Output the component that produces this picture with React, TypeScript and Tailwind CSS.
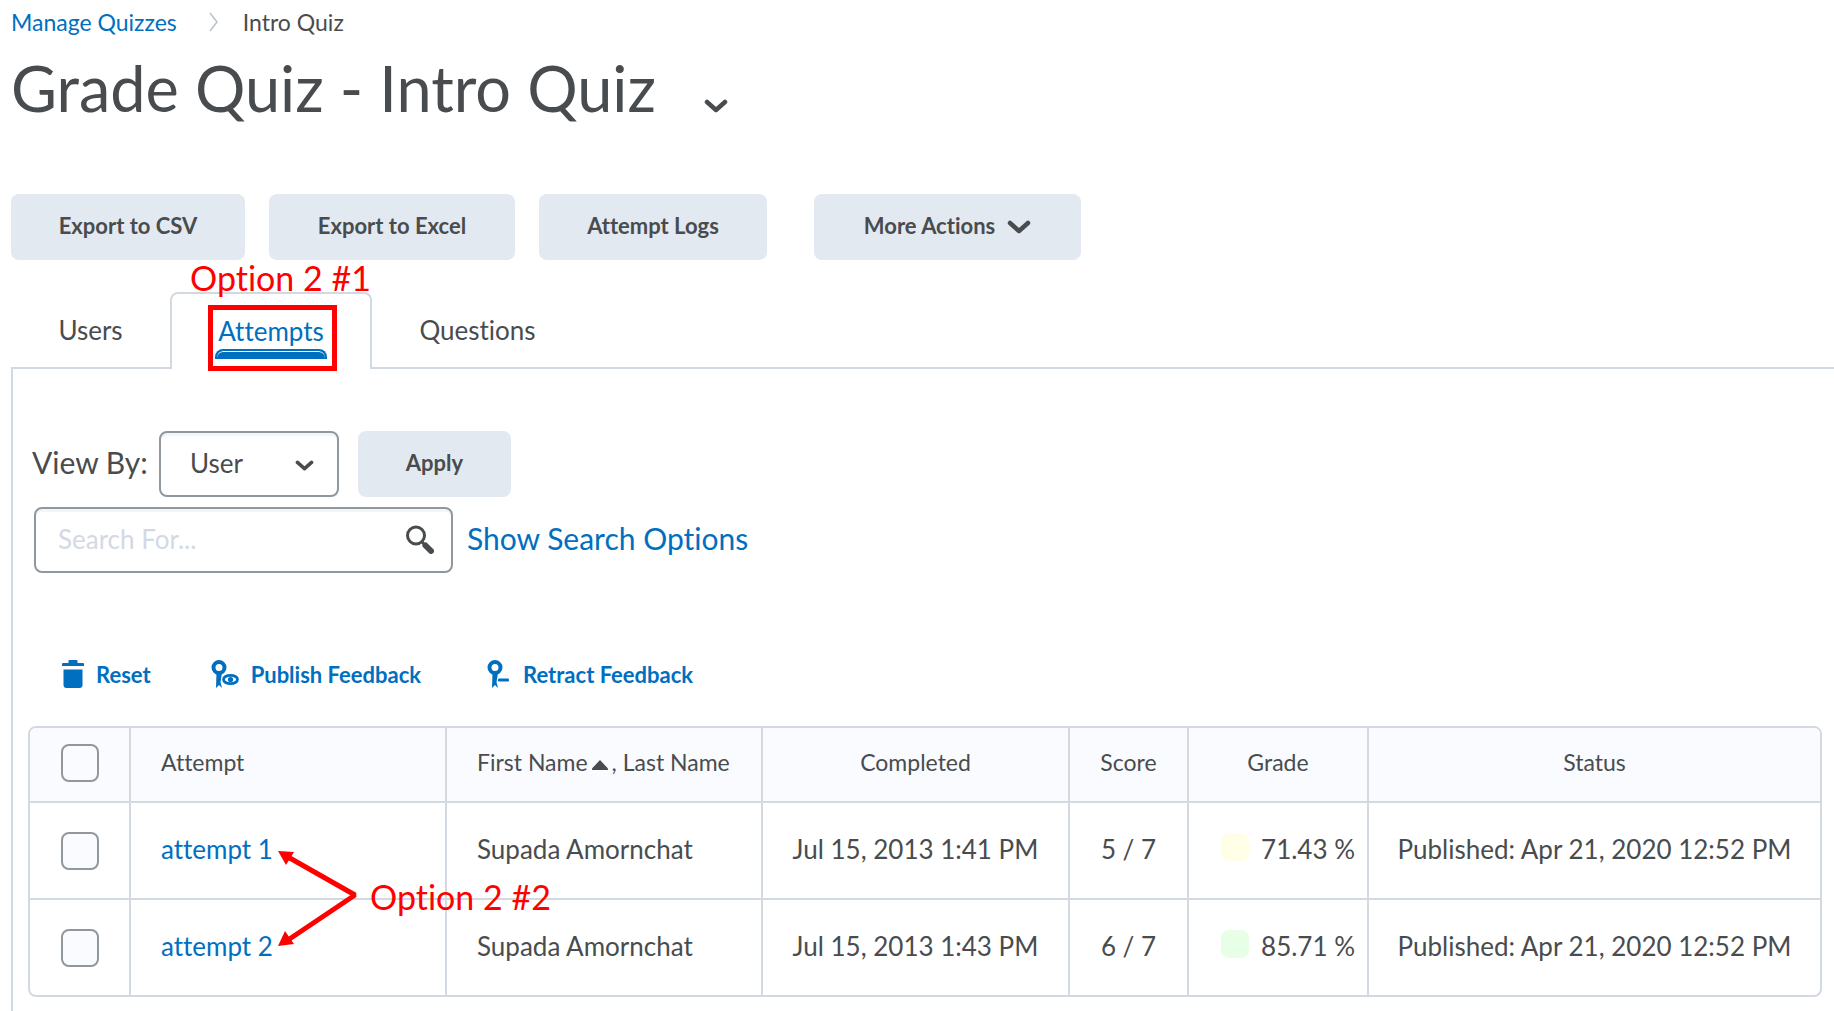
import type { ReactNode } from 'react';

interface Attempt {
  id: number;
  name: string;
  completed: string;
  score: string;
  grade: string;
  swatch: string;
  status: string;
}

const attempts: Attempt[] = [
  {
    id: 1,
    name: 'Supada Amornchat',
    completed: 'Jul 15, 2013 1:41 PM',
    score: '5 / 7',
    grade: '71.43 %',
    swatch: 'bg-[#fffee6]',
    status: 'Published: Apr 21, 2020 12:52 PM',
  },
  {
    id: 2,
    name: 'Supada Amornchat',
    completed: 'Jul 15, 2013 1:43 PM',
    score: '6 / 7',
    grade: '85.71 %',
    swatch: 'bg-[#e6ffe6]',
    status: 'Published: Apr 21, 2020 12:52 PM',
  },
];

function Chevron({ className }: { className: string }) {
  return (
    <svg viewBox="0 0 24 14" className={className} fill="none" stroke="currentColor" strokeWidth="4.5" strokeLinecap="round" strokeLinejoin="round" aria-hidden="true">
      <path d="M3 3l9 8 9-8" />
    </svg>
  );
}

function SearchIcon() {
  return (
    <svg viewBox="0 0 28 29" className="h-[29px] w-7" fill="none" stroke="currentColor" aria-hidden="true">
      <circle cx="10" cy="10.500" r="8.500" strokeWidth="3" />
      <path d="M16 17l3 3" strokeWidth="3" />
      <path d="M19.500 20.500l5.500 5.500" strokeWidth="6" strokeLinecap="round" />
    </svg>
  );
}

function TrashIcon() {
  return (
    <svg viewBox="0 0 22 28" className="h-7 w-[22px]" fill="currentColor" aria-hidden="true">
      <path d="M7.500 0h7a1 1 0 0 1 1 1v2H21a1 1 0 0 1 1 1v2H0V4a1 1 0 0 1 1-1h5.500V1a1 1 0 0 1 1-1z" />
      <path d="M1.500 9.500h19V25a3 3 0 0 1-3 3h-13a3 3 0 0 1-3-3z" />
    </svg>
  );
}

// award ribbon shared by the publish and retract actions
function Ribbon() {
  return (
    <>
      <circle cx="8" cy="7.500" r="5.500" fill="none" stroke="currentColor" strokeWidth="4" />
      <path d="M5.500 13h5v4L9.500 22l1.500 6-3-3-3 3z" />
    </>
  );
}

function PublishIcon() {
  return (
    <svg viewBox="0 0 28 28" className="h-7 w-7" fill="currentColor" aria-hidden="true">
      <Ribbon />
      <ellipse cx="19.500" cy="19.500" rx="9.500" ry="7" fill="#fff" />
      <ellipse cx="19.500" cy="19.500" rx="7" ry="4.200" fill="none" stroke="currentColor" strokeWidth="2.800" />
      <circle cx="19.500" cy="19.500" r="2.600" />
    </svg>
  );
}

function RetractIcon() {
  return (
    <svg viewBox="0 0 22 28" className="h-7 w-[22px]" fill="currentColor" aria-hidden="true">
      <Ribbon />
      <path d="M10.500 17.500H22V22H10.500z" fill="#fff" />
      <rect x="11" y="18.500" width="11" height="3" rx="1" />
    </svg>
  );
}

function GrayButton({ children, className = '' }: { children: ReactNode; className?: string }) {
  return (
    <button type="button" className={`flex h-[66px] items-center justify-center gap-3 rounded-lg bg-[#e3e9f1] pb-1 text-[22px] font-bold ${className}`}>
      {children}
    </button>
  );
}

function Check({ label }: { label: string }) {
  return (
    <input
      type="checkbox"
      aria-label={label}
      className="mx-auto block size-[38px] appearance-none rounded-lg border-2 border-[#90989d] bg-[#f9fbff] checked:bg-[#006fbf]"
    />
  );
}

const th = 'h-[75px] border-r-2 border-b-2 border-[#d3d9e0] bg-[#f9fbff] pb-1 text-[23px] font-normal last:border-r-0';
const td = 'h-[97px] border-r-2 border-b-2 border-[#d3d9e0] text-[26px] whitespace-nowrap group-last:h-[95px] group-last:border-b-0 last:border-r-0';

export default function App() {
  return (
    <div className="flex min-h-screen flex-col overflow-hidden bg-white pl-[11px] text-[#494c4e] [font-family:Lato,sans-serif] [font-variant-ligatures:none]">
      <nav aria-label="Breadcrumb" className="flex h-11 items-center gap-8 text-[23px]">
        <a href="#manage" className="text-[#006fbf]">Manage Quizzes</a>
        <svg viewBox="0 0 10 20" className="h-5 w-[10px]" fill="none" stroke="#b9c2cb" strokeWidth="1.500" aria-hidden="true">
          <path d="M1 1l7 9-7 9" />
        </svg>
        <span className="-ml-2">Intro Quiz</span>
      </nav>

      <div className="flex h-[88px] items-center gap-12">
        <h1 className="text-[63px]">Grade Quiz - Intro Quiz</h1>
        <button type="button" aria-label="Quiz options" className="pt-9">
          <Chevron className="h-[14px] w-6" />
        </button>
      </div>

      <div className="mt-[62px] flex">
        <GrayButton className="mr-6 w-[234px]">Export to CSV</GrayButton>
        <GrayButton className="mr-6 w-[246px]">Export to Excel</GrayButton>
        <GrayButton className="mr-[47px] w-[228px]">Attempt Logs</GrayButton>
        <GrayButton className="w-[267px]">
          More Actions
          <Chevron className="mt-1 h-[14px] w-6" />
        </GrayButton>
      </div>

      <div role="tablist" className="mt-8 flex h-[77px] text-[26px]">
        <button role="tab" type="button" aria-selected="false" className="w-[159px] border-b-2 border-[#d3d9e0] pt-[2px]">Users</button>
        <div className="relative w-[202px] rounded-t-lg border-2 border-b-0 border-[#d3d9e0]">
          <button role="tab" type="button" aria-selected="true" className="flex h-full w-full flex-col items-center justify-end pb-[10px] leading-9 text-[#006fbf]">
            Attempts
            <span className="h-[10px] w-[112px] rounded-t-lg border-2 border-b-0 border-[#006fbf] bg-[#006fbf] shadow-[inset_0_1px_0_white]" />
          </button>
          <span className="absolute -top-[42px] left-[18px] text-[34px] whitespace-nowrap text-[#ff0000]">Option 2 #1</span>
          <span className="absolute top-[11px] left-9 h-[66px] w-[129px] border-[5px] border-[#ff0000]" />
        </div>
        <button role="tab" type="button" aria-selected="false" className="w-[211px] border-b-2 border-[#d3d9e0] pt-[2px]">Questions</button>
        <div className="flex-1 border-b-2 border-[#d3d9e0]" />
      </div>

      <div className="flex-1 border-l-2 border-[#d3d9e0] pr-3 pl-[15px]">
        <div className="flex items-center pt-[62px] pl-1">
          <label htmlFor="view-by" className="w-[127px] pb-1 text-[30px]">View By:</label>
          <div className="relative">
            <select id="view-by" className="h-[66px] w-[180px] appearance-none rounded-lg border-2 border-[#90989d] bg-white pb-[2px] pl-[29px] text-[26px] shadow-[inset_0_3px_0_#f4f5f6]">
              <option>User</option>
            </select>
            <Chevron className="pointer-events-none absolute top-[29px] right-[25px] h-[11px] w-[19px]" />
          </div>
          <GrayButton className="ml-[19px] w-[153px]">Apply</GrayButton>
        </div>

        <div className="mt-[10px] flex items-center gap-[14px] pl-[6px]">
          <div className="relative">
            <input
              type="text"
              aria-label="Search For"
              placeholder="Search For..."
              className="h-[66px] w-[419px] rounded-lg border-2 border-[#90989d] pr-16 pb-[2px] pl-[22px] text-[26px] shadow-[inset_0_3px_0_#f4f5f6] placeholder:text-[#d3d9e3]"
            />
            <button type="button" aria-label="Search" className="absolute top-[18px] right-[19px]">
              <SearchIcon />
            </button>
          </div>
          <a href="#search-options" className="pb-1 text-[30px] text-[#006fbf]">Show Search Options</a>
        </div>

        <div className="mt-[81px] flex h-10 items-center pl-[34px] text-[22px] font-bold text-[#006fbf]">
          <button type="button" className="mr-[60px] flex items-center gap-3"><TrashIcon />Reset</button>
          <button type="button" className="mr-[66px] flex items-center gap-3"><PublishIcon />Publish Feedback</button>
          <button type="button" className="flex items-center gap-[14px]"><RetractIcon />Retract Feedback</button>
        </div>

        <div className="relative mt-8">
          <div className="overflow-hidden rounded-lg border-2 border-[#d3d9e0]">
            <table className="w-full table-fixed border-separate border-spacing-0">
              <colgroup>
                <col className="w-[101px]" />
                <col className="w-[316px]" />
                <col className="w-[316px]" />
                <col className="w-[307px]" />
                <col className="w-[119px]" />
                <col className="w-[180px]" />
                <col />
              </colgroup>
              <thead>
                <tr>
                  <th className={th}><Check label="Select all rows" /></th>
                  <th className={`${th} pl-[30px] text-left`}>Attempt</th>
                  <th className={`${th} pl-[30px] text-left whitespace-nowrap`}>
                    First Name
                    <svg viewBox="0 0 16 10" className="mx-1 inline-block h-[10px] w-4" fill="currentColor" aria-hidden="true">
                      <path d="M8 0l8 8.500V10H0V8.500z" />
                    </svg>
                    , Last Name
                  </th>
                  <th className={th}>Completed</th>
                  <th className={th}>Score</th>
                  <th className={th}>Grade</th>
                  <th className={th}>Status</th>
                </tr>
              </thead>
              <tbody>
                {attempts.map((a) => (
                  <tr key={a.id} className="group">
                    <td className={td}><Check label={`Select attempt ${a.id}`} /></td>
                    <td className={`${td} pb-[2px] pl-[30px]`}>
                      <a href={`#attempt-${a.id}`} className="text-[#006fbf]">attempt {a.id}</a>
                    </td>
                    <td className={`${td} pb-[2px] pl-[30px]`}>{a.name}</td>
                    <td className={`${td} pb-[2px] text-center`}>{a.completed}</td>
                    <td className={`${td} pb-[2px] text-center`}>{a.score}</td>
                    <td className={`${td} pb-[2px]`}>
                      <div className="flex items-center justify-end gap-3 pr-3">
                        <span className={`mb-[6px] size-7 rounded-lg ${a.swatch}`} />
                        {a.grade}
                      </div>
                    </td>
                    <td className={`${td} pb-[2px] text-center`}>{a.status}</td>
                  </tr>
                ))}
              </tbody>
            </table>
          </div>

          <div className="pointer-events-none absolute top-[123px] left-[250px] flex items-center gap-3">
            <svg viewBox="0 0 80 98" className="h-[98px] w-20" fill="none" stroke="#ff0000" strokeWidth="5" strokeLinejoin="bevel" aria-hidden="true">
              <path d="M10 8l67 38-67 45" />
              <path d="M0 2l16 1-8 13zM0 97l7-15 9 13z" fill="#ff0000" stroke="none" />
            </svg>
            <span className="pb-1 text-[34px] whitespace-nowrap text-[#ff0000]">Option 2 #2</span>
          </div>
        </div>
      </div>
    </div>
  );
}
